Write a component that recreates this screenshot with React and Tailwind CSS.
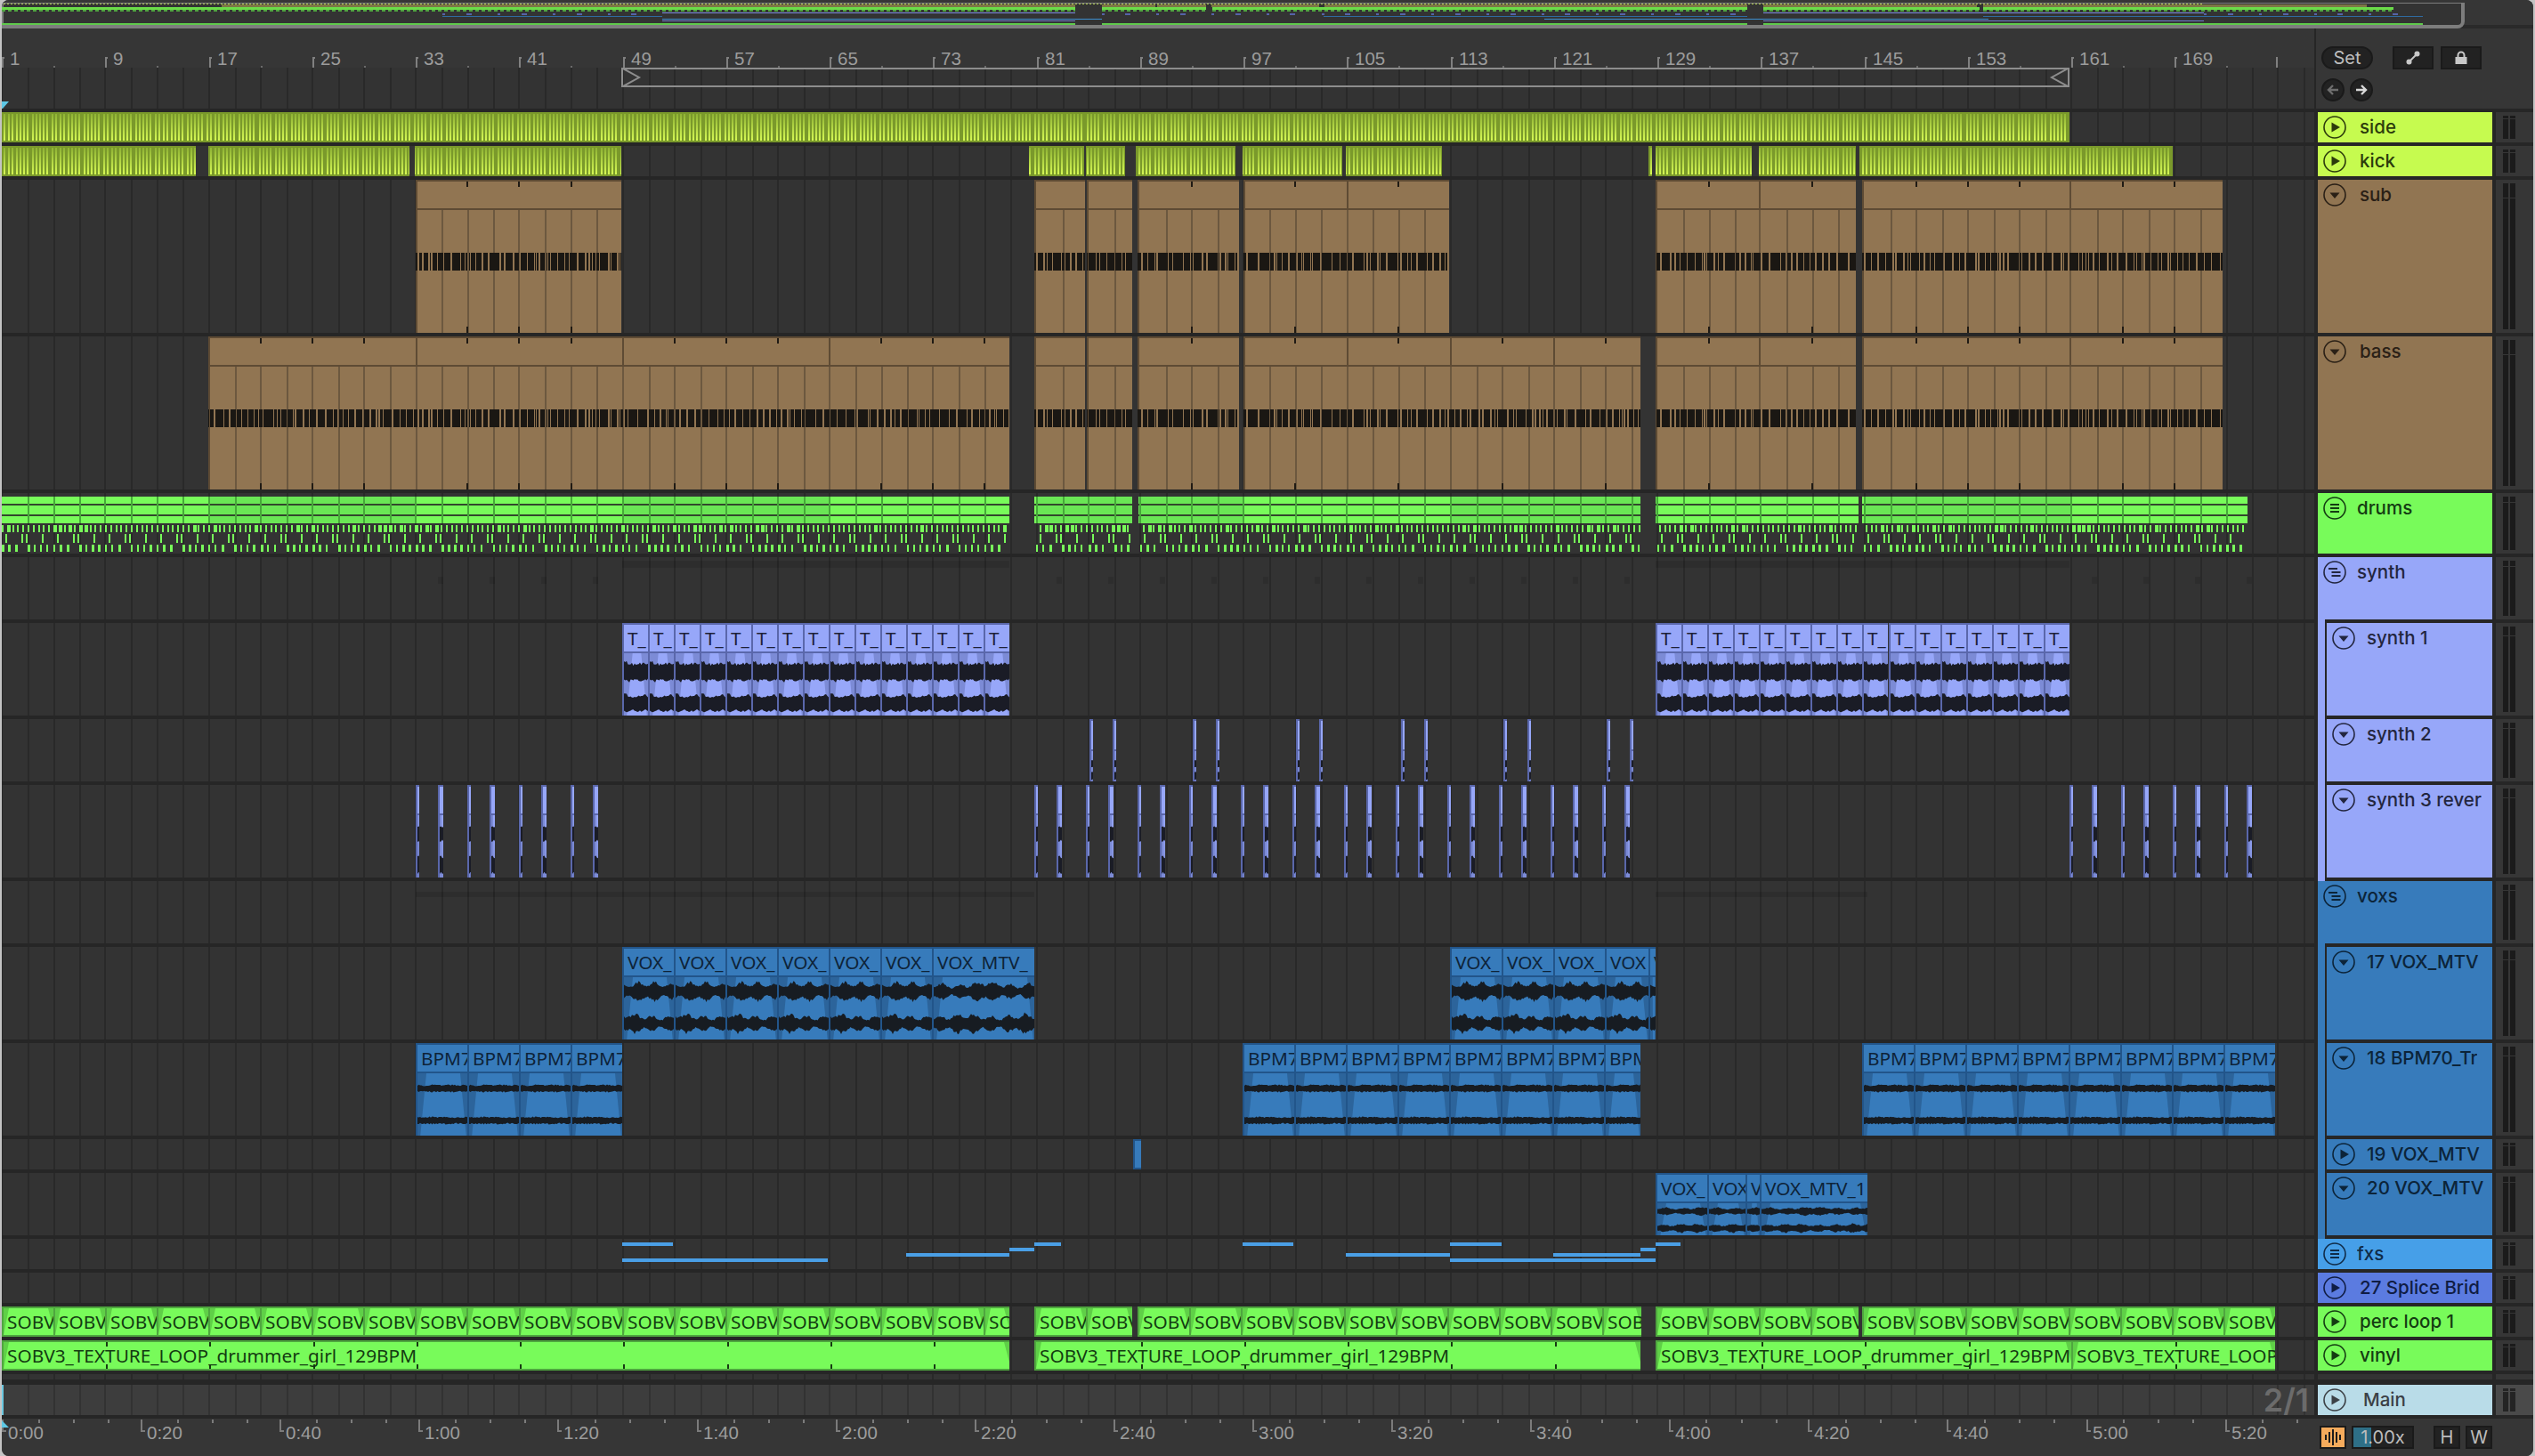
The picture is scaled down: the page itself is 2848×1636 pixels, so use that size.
import React from 'react';

const rng = (s) => { let a = s * 2654435761 >>> 0; return () => { a = (a + 0x6D2B79F5) >>> 0; let t = a; t = Math.imul(t ^ (t >>> 15), t | 1); t ^= t + Math.imul(t ^ (t >>> 7), t | 61); return ((t ^ (t >>> 14)) >>> 0) / 4294967296; }; };
const L = 2;
const gridXs = (() => { const o = []; for (let k = 0; k < 23; k++) { const b = 2.2 + 116.24 * k; [0, 30, 58.5, 88].forEach((d) => o.push(Math.round(b + d))); } return o; })();
const gridPath = gridXs.map((x) => `M${x - L - 1} 0h2v400h-2z`).join('');

const wavePath = (w, cy, amp, seed, low = 0.16) => {
  const r = rng(seed); const t = []; const b = [];
  for (let x = 0; x <= w + 1.5; x += 1.5) {
    const env = (1 - low) + low * (Math.sin(x * 0.33 + seed) * 0.6 + Math.sin(x * 0.09 + seed * 2) * 0.4);
    t.push(`${x.toFixed(1)} ${(cy - amp * env * (0.78 + 0.4 * r())).toFixed(1)}`);
    b.push(`${x.toFixed(1)} ${(cy + amp * env * (0.78 + 0.4 * r())).toFixed(1)}`);
  }
  return 'M' + t.join('L') + 'L' + b.reverse().join('L') + 'Z';
};

const stripePath = (() => { const pat = [0, 4, 8.5, 12.5, 18, 22, 26, 30, 36, 40, 44, 48, 52]; let d = ''; for (let k = 0; k < 46; k++) pat.forEach((p) => { d += `M${Math.round(k * 58.12 + p)} 0h2v30h-2z`; }); return d; })();
const barPath = (() => { const r = rng(11); let d = ''; let x = 0; while (x < 2600) { const w = 1 + Math.floor(r() * 7) + (r() > 0.7 ? 4 : 0); d += `M${x} 0h${w}v20h-${w}z`; x += w + 1 + Math.floor(r() * 2); } return d; })();

const XX = (k) => Math.round(2.2 + 58.12 * k);

const Grid = ({ c = '#292929' }) => (
  <svg className="absolute inset-0 w-full h-full" shapeRendering="crispEdges"><path d={gridPath} fill={c} /></svg>
);

const themes = {
  peri: { bg: 'bg-[#97a7f9]', border: 'border-[#5a67ab]', text: 'text-[#1d2036]', fade: 'rgba(30,40,90,.22)', wave: '#1a1c26' },
  vox: { bg: 'bg-[#377bbb]', border: 'border-[#22558a]', text: 'text-[#0e2338]', fade: 'rgba(10,30,60,.25)', wave: '#171c22' },
  green: { bg: 'bg-[#78fb5a]', border: 'border-[#4fa63f]', text: 'text-[#133b11]', fade: 'rgba(40,110,30,.3)', wave: '#111' },
};
const clipFont = 'font-["Noto_Sans",sans-serif] text-[20.8px] leading-none whitespace-nowrap';

const Clip = ({ x, w, t, title, titleH = 30, rowH, wave, seed = 3, low }) => {
  const th = themes[t]; const bodyH = rowH - titleH - 4;
  return (
    <div className={`absolute top-0 h-full overflow-hidden border-t-2 border-l-2 ${th.bg} ${th.border}`} style={{ left: x - L, width: w }}>
      <div className={`flex items-center overflow-hidden border-b-2 pl-[4px] ${th.border} ${th.text} ${clipFont}`} style={{ height: titleH + 2 }}>{title}</div>
      <svg className="block" width={w} height={bodyH + 2}>
        <polygon points={`0,0 ${Math.min(10, w / 3)},0 3,${bodyH + 2} 0,${bodyH + 2}`} fill={th.fade} />
        <polygon points={`${w},0 ${w - Math.min(10, w / 3)},0 ${w - 3},${bodyH + 2} ${w},${bodyH + 2}`} fill={th.fade} />
        {wave && <path d={wavePath(w, wave[0], wave[2], seed, low)} fill={th.wave} />}
        {wave && <path d={wavePath(w, wave[1], wave[2], seed + 1, low)} fill={th.wave} />}
      </svg>
    </div>
  );
};

const FullClip = ({ x, w, title, ticks }) => (
  <div className={`absolute top-0 h-full overflow-hidden border-y-2 border-l-2 flex items-center pl-[4px] ${themes.green.bg} ${themes.green.border} ${themes.green.text} ${clipFont}`} style={{ left: x - L, width: w }}>
    <svg className="absolute left-0 top-0" width={w} height="30">
      <polygon points={`0,0 6,0 0,30`} fill={themes.green.fade} />
      <polygon points={`${w},0 ${w - 8},0 ${w},30`} fill={themes.green.fade} />
      {ticks && ticks.map((tx) => <g key={tx} fill="#173a12"><rect x={tx - x - 1} y="0" width="2" height="5" /><rect x={tx - x - 1} y="25" width="2" height="5" /></g>)}
    </svg>
    <span className="relative">{title}</span>
  </div>
);

const StripeClip = ({ a, b }) => (
  <div className="absolute top-0 h-full overflow-hidden bg-[#7a992b]" style={{ left: a - L, width: b - a }}>
    <svg className="absolute top-[2px]" width="2620" height="30" style={{ left: -(a - 0) }} shapeRendering="crispEdges"><path d={stripePath} fill="url(#limeG)" /></svg>
  </div>
);

const TanClip = ({ a, b, joined }) => {
  const xs = gridXs.filter((x) => x > a + 3 && x < b - 2);
  const ticks = []; for (let k = 0; k < 45; k++) { const v = XX(k); if (v > a + 3 && v < b - 3) ticks.push(v); }
  return (
    <div className="absolute top-0 h-full overflow-hidden bg-[#917552]" style={{ left: a - L, width: b - a }}>
      <svg className="absolute inset-0 w-full h-full" shapeRendering="crispEdges">
        <rect width={b - a} height="2" fill="#5e4b34" />
        <rect width="2" height="34" fill="#5e4b34" />
        <rect y="34" width="2" height="138" fill={joined ? '#6c583f' : '#5e4b34'} />
        <rect y="32" width={b - a} height="2" fill="#5e4b34" />
        {xs.map((x) => <rect key={x} x={x - a - 1} y="34" width="2" height="138" fill="#6c583f" />)}
        {ticks.map((x) => <g key={x} fill="#1f1a14"><rect x={x - a - 1} y="2" width="2" height="6" /><rect x={x - a - 1} y="165" width="2" height="7" /></g>)}
        <g transform={`translate(${-a} 82)`}><path d={barPath} fill="#1a1713" /></g>
      </svg>
    </div>
  );
};

const subSegs = [[467, 698], [1162, 1219], [1221, 1272], [1278, 1392], [1397, 1513], [1513, 1628], [1860, 1976], [1976, 2085], [2092, 2325], [2325, 2497]];
const bassSegs = [[234, 467], [467, 699], [699, 931], [931, 1134], [1162, 1219], [1221, 1272], [1278, 1392], [1397, 1513], [1513, 1629], [1629, 1745], [1745, 1843], [1860, 1976], [1976, 2085], [2092, 2325], [2325, 2497]];
const drumSegs = [[2, 1134], [1162, 1272], [1279, 1843], [1860, 2088], [2092, 2525]];

const DrumsLane = () => {
  const r = rng(5);
  const n1 = []; for (let x = 2; x < 2530; x += 5.8) n1.push([x, r() > 0.82 ? 4 : 2]);
  const n2 = []; for (let k = 0; k < 44; k++) [6, 24, 29, 47].forEach((p) => n2.push([k * 58.12 + p, 2]));
  const n3 = []; for (let k = 0; k < 44; k++) [2, 9, 17, 31, 38, 45, 52].forEach((p) => n3.push([k * 58.12 + p, r() > 0.5 ? 3 : 2]));
  return (
    <svg className="absolute inset-0 w-full h-full" shapeRendering="crispEdges">
      {drumSegs.map(([a, b]) => {
        const segs = []; const clip = (arr, y, h) => arr.filter(([x, w]) => x >= a && x + w <= b).map(([x, w], i) => <rect key={`${y}-${i}`} x={Math.round(x) - L} y={y} width={w} height={h} fill="#78fb5a" />);
        for (let k = 0; k < 12; k++) {
          const s = Math.max(a, 2 + 232.5 * k); const e = Math.min(b, 2 + 232.5 * (k + 1));
          if (e > s) segs.push(<rect key={k} x={s - L} y="4" width={e - s} height="30" fill={k % 2 === 1 ? '#6ae655' : '#78fb5a'} />);
        }
        return (
          <g key={a}>
            {segs}
            <rect x={a - L} y="12" width={b - a} height="2" fill="#32482c" />
            <rect x={a - L} y="24" width={b - a} height="2" fill="#32482c" />
            {gridXs.filter((x) => x > a && x < b).map((x) => <rect key={x} x={x - L - 1} y="4" width="2" height="30" fill="#47a83a" />)}
            {clip(n1, 36, 8)}{clip(n2, 46, 10)}{clip(n3, 58, 8)}
          </g>
        );
      })}
    </svg>
  );
};

const range = (s, n, p) => Array.from({ length: n }, (_, i) => s + i * p);
const syn3N = [...range(467, 4, 58), ...range(1162, 12, 58), ...range(2325, 4, 58)];
const syn3W = syn3N.map((x) => x + 25);
const syn2 = [1224, 1250, 1340, 1366, 1456, 1482, 1574, 1600, 1689, 1716, 1805, 1831];

const fxsBars = [[0, 699, 756], [0, 1162, 1192], [0, 1396, 1453], [0, 1629, 1687], [0, 1860, 1888], [6, 1134, 1162], [6, 1843, 1860], [12, 1018, 1134], [12, 1512, 1629], [12, 1745, 1843], [18, 699, 930], [18, 1629, 1860]];

const Band = ({ a, b, top = 'top-[4px]', h = 'h-[8px]' }) => <div className={`absolute bg-black/10 ${top} ${h}`} style={{ left: a - L, width: b - a }} />;

const percClips = (() => { const o = []; [[2, 1134, 58.05], [1162, 1272, 58], [1278, 1844, 58.05], [1860, 2088, 58], [2092, 2556, 58]].forEach(([a, b, p]) => { for (let x = a; x < b - 1; x += p) { const r = Math.round(x); o.push([r, Math.round(Math.min(x + p, b)) - r]); } }); return o; })();
const vinylTicks = range(2, 23, 116.24).map(Math.round);
const LONG = 'SOBV3_TEXTURE_LOOP_drummer_girl_129BPM';

const lanes = {
  side: <StripeClip a={2} b={2325} />,
  kick: [[2, 220], [234, 460], [466, 698], [1156, 1218], [1220, 1264], [1276, 1388], [1396, 1508], [1512, 1620], [1852, 1856], [1860, 1968], [1976, 2085], [2089, 2441]].map(([a, b]) => <StripeClip key={a} a={a} b={b} />),
  sub: subSegs.map(([a, b], i) => <TanClip key={a} a={a} b={b} joined={i > 0 && subSegs[i - 1][1] === a} />),
  bass: bassSegs.map(([a, b], i) => <TanClip key={a} a={a} b={b} joined={i > 0 && bassSegs[i - 1][1] === a} />),
  drums: <DrumsLane />,
  synth: <>{[[699, 1134], [1860, 2325]].map(([a, b]) => <Band key={a} a={a} b={b} />)}{syn3W.map((x) => <Band key={x} a={x} b={x + 6} top="top-[22px]" />)}</>,
  s1: [...range(699, 15, 29).map((x) => [x, 29]), ...range(1860, 16, 29.06).map((x) => [Math.round(x), 29])].map(([x, w]) => <Clip key={x} x={x} w={w} t="peri" title="T_" rowH={104} wave={[21, 56, 11]} seed={7} />),
  s2: syn2.map((x) => <Clip key={x} x={x} w={4} t="peri" rowH={70} titleH={32} wave={[14, 28, 5]} />),
  s3: [...syn3N.map((x) => [x, 4]), ...syn3W.map((x) => [x, 6])].map(([x, w]) => <Clip key={x} x={x} w={w} t="peri" rowH={104} wave={[21, 56, 11]} />),
  voxs: <>{[[467, 1162], [1860, 2098]].map(([a, b]) => <Band key={a} a={a} b={b} top="top-[12px]" h="h-[6px]" />)}</>,
  v17: [...range(699, 6, 58).map((x) => [x, 58, 'VOX_']), [1047, 115, 'VOX_MTV_'], [1629, 58, 'VOX_'], [1687, 58, 'VOX_'], [1745, 58, 'VOX_'], [1803, 49, 'VOX'], [1852, 8, 'V']].map(([x, w, s]) => <Clip key={x} x={x} w={w} t="vox" title={s} rowH={104} wave={[16, 52, 11]} seed={w > 60 ? 17 : 9} low={0.34} />),
  v18: [...range(467, 4, 58), ...range(1396, 7, 58), ...range(2092, 8, 58)].map((x) => <Clip key={x} x={x} w={58} t="vox" title="BPM7" rowH={104} wave={[17, 53, 4]} seed={21} low={0.1} />).concat(<Clip key="last" x={1802} w={41} t="vox" title="BPM" rowH={104} wave={[17, 53, 4]} seed={21} low={0.1} />),
  v19: <Clip x={1273} w={9} t="vox" rowH={34} titleH={30} />,
  v20: [[1860, 58, 'VOX_'], [1918, 43, 'VOX'], [1961, 16, 'V'], [1977, 121, 'VOX_MTV_1']].map(([x, w, s]) => <Clip key={x} x={x} w={w} t="vox" title={s} rowH={70} wave={[9, 28, 5]} seed={17} low={0.3} />),
  fxs: fxsBars.map(([y, a, b], i) => <div key={i} className="absolute h-[4px] bg-[#4a9fe6]" style={{ top: y + 4, left: a - L, width: b - a }} />),
  perc: percClips.map(([x, w]) => <FullClip key={x} x={x} w={w} title={w < 34 ? 'SO' : w < 50 ? 'SOB' : 'SOBV'} />),
  vinyl: [[2, 1132, LONG], [1162, 681, LONG], [1860, 467, LONG], [2327, 229, 'SOBV3_TEXTURE_LOOP']].map(([x, w, s]) => <FullClip key={x} x={x} w={w} title={s} ticks={vinylTicks.filter((t) => t > x + 4 && t < x + w - 4)} />),
};

const hdr = {
  lime: { bg: 'bg-[#c6fb4f]', fg: 'text-[#2c3b0c]' },
  tan: { bg: 'bg-[#917552]', fg: 'text-[#2a2016]' },
  green: { bg: 'bg-[#78fb5a]', fg: 'text-[#143c12]' },
  peri: { bg: 'bg-[#97a7f9]', fg: 'text-[#23263f]' },
  vox: { bg: 'bg-[#377bbb]', fg: 'text-[#0c2439]' },
  fx: { bg: 'bg-[#469fe8]', fg: 'text-[#102c48]' },
  spl: { bg: 'bg-[#5b7be0]', fg: 'text-[#101d44]' },
  main: { bg: 'bg-[#b9dce8]', fg: 'text-[#3c4146]' },
};

const Icon = ({ k }) => (
  <svg width="26" height="26" viewBox="0 0 26 26" className="shrink-0" fill="currentColor">
    <circle cx="13" cy="13" r="12" fill="none" stroke="currentColor" strokeWidth="1.6" />
    {k === 'play' && <path d="M9.5 7.5L19 13L9.5 18.5Z" />}
    {k === 'down' && <path d="M7.5 10.5H18.5L13 17Z" />}
    {k === 'menu' && <path d="M8 8h10v2H8zM8 12h10v2H8zM8 16h10v2H8z" />}
    {k === 'step' && <path d="M6 8h10v2H6zM9.5 12h10v2H9.5zM9.5 16h10v2H9.5z" />}
  </svg>
);

const Meter = ({ h, light }) => {
  const H = h - 8; const cap = Math.max(2, Math.round(H * 0.1));
  const bar = light ? 'bg-[#242424]' : 'bg-[#1b1b1b]';
  return (
    <div className={`w-[42px] h-full flex gap-[2px] pl-[8px] pt-[4px] ${light ? 'bg-[#4a4a4a]' : 'bg-[#363636]'}`}>
      {[0, 1].map((i) => (
        <div key={i} className="w-[6px] flex flex-col gap-[1px]" style={{ height: H }}>
          <div className={bar} style={{ height: cap }} />
          <div className={`flex-1 ${bar}`} />
        </div>
      ))}
    </div>
  );
};

const Row = ({ id, name, h, c, icon, indent, ml = 'ml-[15px]', strip }) => {
  const th = hdr[c];
  return (
    <div className="flex mb-[4px]" style={{ height: h }}>
      <div className="relative w-[2598px] h-full overflow-hidden bg-[#333333]">
        <Grid />
        {lanes[id]}
      </div>
      <div className="relative ml-[4px] w-[196px] h-full">
        {(indent || strip) && <div className={`absolute left-0 top-0 -bottom-[4px] w-[8px] ${th.bg}`} />}
        <div className={`absolute top-0 right-0 bottom-0 pl-[6px] pt-[4px] flex items-start ${th.bg} ${th.fg} ${indent ? 'left-[10px]' : 'left-0'}`}>
          <Icon k={icon} />
          <span className={`${ml} font-["Inter",sans-serif] font-medium text-[20.5px] leading-[26px] whitespace-nowrap overflow-hidden`}>{name}</span>
        </div>
      </div>
      <div className="ml-[4px] h-full"><Meter h={h} /></div>
    </div>
  );
};

const rows = [
  { id: 'side', name: 'side', h: 34, c: 'lime', icon: 'play' },
  { id: 'kick', name: 'kick', h: 34, c: 'lime', icon: 'play' },
  { id: 'sub', name: 'sub', h: 172, c: 'tan', icon: 'down' },
  { id: 'bass', name: 'bass', h: 172, c: 'tan', icon: 'down' },
  { id: 'drums', name: 'drums', h: 68, c: 'green', icon: 'menu', ml: 'ml-[12px]' },
  { id: 'synth', name: 'synth', h: 70, c: 'peri', icon: 'step', ml: 'ml-[12px]', strip: true },
  { id: 's1', name: 'synth 1', h: 104, c: 'peri', icon: 'down', indent: true, ml: 'ml-[13px]' },
  { id: 's2', name: 'synth 2', h: 70, c: 'peri', icon: 'down', indent: true, ml: 'ml-[13px]' },
  { id: 's3', name: 'synth 3 rever', h: 104, c: 'peri', icon: 'down', indent: true, ml: 'ml-[13px]' },
  { id: 'voxs', name: 'voxs', h: 70, c: 'vox', icon: 'step', ml: 'ml-[12px]', strip: true },
  { id: 'v17', name: '17 VOX_MTV', h: 104, c: 'vox', icon: 'down', indent: true, ml: 'ml-[13px]' },
  { id: 'v18', name: '18 BPM70_Tr', h: 104, c: 'vox', icon: 'down', indent: true, ml: 'ml-[13px]' },
  { id: 'v19', name: '19 VOX_MTV', h: 34, c: 'vox', icon: 'play', indent: true, ml: 'ml-[13px]' },
  { id: 'v20', name: '20 VOX_MTV', h: 70, c: 'vox', icon: 'down', indent: true, ml: 'ml-[13px]' },
  { id: 'fxs', name: 'fxs', h: 34, c: 'fx', icon: 'menu', ml: 'ml-[12px]' },
  { id: 'spl', name: '27 Splice Brid', h: 34, c: 'spl', icon: 'play' },
  { id: 'perc', name: 'perc loop 1', h: 34, c: 'green', icon: 'play' },
  { id: 'vinyl', name: 'vinyl', h: 34, c: 'green', icon: 'play' },
];

const OV = 1.065;
const ovRects = (list, y, h, fill) => list.map(([a, b], i) => <rect key={`${y}${i}`} x={a * OV} y={y} width={(b - a) * OV} height={h} fill={fill} />);
const Overview = () => (
  <div className="relative h-[32px] w-full bg-[#363636] overflow-hidden">
    <div className="absolute left-0 top-[28px] h-[4px] w-full bg-[#2a2a2a]" />
    <div className="absolute left-0 top-[3px] h-[29px] w-[2767px] bg-[#333333] border-l-[2px] border-r-[4px] border-b-[4px] border-t border-[#7d7d7d] rounded-br-[8px]" />
    <svg className="absolute left-[-2px] top-0" width="2765" height="28" shapeRendering="crispEdges">
      <line x1="4" x2={2325 * OV} y1="4.5" y2="4.5" stroke="#a8c84a" strokeDasharray="2 2" />
      {ovRects(bassSegs, 5, 3, '#7d7746')}
      {ovRects(drumSegs, 8, 3, '#6bdc49')}
      {drumSegs.map(([a, b]) => <line key={a} x1={a * OV} x2={b * OV} y1="12" y2="12" stroke="#4fa63f" strokeWidth="2" strokeDasharray="4 3" />)}
      {ovRects([[699, 1134], [1860, 2325]], 14, 1, '#7d8de0')}
      {syn3N.map((x) => <rect key={x} x={x * OV} y="15" width="3" height="2" fill="#5563a8" />)}
      {syn3W.map((x) => <rect key={x} x={x * OV} y="15" width="6" height="2" fill="#5563a8" />)}
      {ovRects([[467, 699], [1396, 1843], [2092, 2556]], 18, 1, '#2f6aa0')}
      {ovRects([[699, 1162], [1629, 1860], [1860, 2098]], 21, 1, '#3d8fd0')}
      {ovRects([[699, 1134], [1860, 2325]], 23, 1, '#6b7ac8')}
      {ovRects([[2, 1134], [1162, 1843], [1860, 2556]], 26, 2, '#5fc94b')}
    </svg>
  </div>
);

const Ruler = () => {
  const labels = range(1, 22, 8);
  return (
    <div className="relative h-[90px] w-[2598px] bg-[#363636] overflow-hidden">
      <div className="absolute left-0 right-0 top-[44px] bottom-0 bg-[#333333] overflow-hidden"><Grid /></div>
      {labels.map((b) => {
        const x = Math.round(2.2 + 14.53 * (b - 1)) - L;
        return (
          <React.Fragment key={b}>
            <div className="absolute top-[32px] h-[12px] w-[2px] bg-[#808080]" style={{ left: x }} />
            <div className="absolute top-[32px] h-[2px] w-[3px] bg-[#808080]" style={{ left: x }} />
            <div className="absolute top-[42px] h-[2px] w-[2px] bg-[#6a6a6a]" style={{ left: x + 58 }} />
            <span className='absolute top-[22px] font-["Liberation_Sans",sans-serif] text-[20.5px] leading-[24px] text-[#9c9c9c]' style={{ left: x + 9 }}>{b}</span>
          </React.Fragment>
        );
      })}
      <div className="absolute top-[32px] h-[12px] w-[2px] bg-[#808080] left-[2555px]" />
      <div className="absolute top-[44px] left-[696px] h-[22px] w-[1627px] border-y-2 border-x-2 border-[#8d8d8d]">
        <svg className="absolute left-0 top-0" width="1623" height="18" fill="none" stroke="#8d8d8d" strokeWidth="2">
          <path d="M0 -1L18 9L0 19" />
          <path d="M1623 -1L1605 9L1623 19" />
        </svg>
      </div>
      <svg className="absolute left-0 top-[82px]" width="8" height="8"><path d="M0 0H8L1 8H0Z" fill="#5ec8e5" /></svg>
    </div>
  );
};

const timeLabels = ['0:00', '0:20', '0:40', '1:00', '1:20', '1:40', '2:00', '2:20', '2:40', '3:00', '3:20', '3:40', '4:00', '4:20', '4:40', '5:00', '5:20'];
const TimeRuler = () => (
  <div className="relative h-[42px] w-[2598px] overflow-hidden">
    <svg className="absolute left-0 top-0" width="2598" height="16" shapeRendering="crispEdges">
      {range(0, 70, 39.03).map((x, i) => <rect key={i} x={Math.round(x) + 2} y="1" width="2" height={i % 4 === 0 ? 0 : 4} fill="#7b7b7b" />)}
      {timeLabels.map((t, i) => <path key={t} d={`M${Math.round(i * 156.1)} 1h2v12h3v2h-5z`} fill="#7b7b7b" />)}
    </svg>
    {timeLabels.map((t, i) => (
      <span key={t} className='absolute top-[4px] font-["Liberation_Sans",sans-serif] text-[20.5px] leading-[24px] text-[#9c9c9c]' style={{ left: Math.round(i * 156.1) + 7 }}>{t}</span>
    ))}
    <svg className="absolute left-0 top-[2px]" width="8" height="8"><path d="M0 0L8 8H0Z" fill="#5ec8e5" /></svg>
  </div>
);

const BtnSq = ({ w = 'w-[46px]', children }) => (
  <div className={`${w} h-[26px] flex items-center justify-center bg-[#222222] border-2 border-[#1a1a1a] text-[#bdbdbd] font-["Inter",sans-serif] text-[20px] leading-none`}>{children}</div>
);

export default function App() {
  return (
    <div className="w-[2848px] h-[1636px] bg-[#c4c4c4] pl-[2px] pr-[2px] overflow-hidden">
      <svg className="absolute w-0 h-0"><defs><linearGradient id="limeG" x1="0" x2="0" y1="0" y2="1"><stop offset="0" stopColor="#8fb334" /><stop offset="1" stopColor="#d6f955" /></linearGradient></defs></svg>
      <div className="w-[2844px] h-[1636px] bg-[#262626] rounded-[8px] overflow-hidden">
        <Overview />
        <div className="flex mb-[4px]">
          <Ruler />
          <div className="ml-[2px] w-[244px] h-[90px] bg-[#363636] pl-[6px] pt-[20px]">
            <div className="flex items-center">
              <div className='w-[58px] h-[26px] rounded-full bg-[#222222] border-2 border-[#1a1a1a] flex items-center justify-center text-[#bdbdbd] font-["Inter",sans-serif] text-[20px] leading-none'>Set</div>
              <div className="ml-[22px]"><BtnSq><svg width="16" height="16" viewBox="0 0 16 16"><path d="M3.5 12.5L12.5 3.5" stroke="#c8c8c8" strokeWidth="2" /><circle cx="3.5" cy="12.5" r="3" fill="#c8c8c8" /><circle cx="12.5" cy="3.5" r="3" fill="#c8c8c8" /></svg></BtnSq></div>
              <div className="ml-[8px]"><BtnSq><svg width="16" height="16" viewBox="0 0 16 16" fill="#c8c8c8"><path d="M4.5 7V5a3.5 3.5 0 0 1 7 0v2" fill="none" stroke="#c8c8c8" strokeWidth="2" /><rect x="1.5" y="7" width="13" height="8" /></svg></BtnSq></div>
            </div>
            <div className="flex gap-[6px] mt-[10px]">
              <div className="w-[26px] h-[26px] rounded-full bg-[#222222] border-2 border-[#1a1a1a] flex items-center justify-center"><svg width="14" height="12" viewBox="0 0 14 12"><path d="M13 6H3M7 1L2 6L7 11" fill="none" stroke="#6e6e6e" strokeWidth="2.4" /></svg></div>
              <div className="w-[26px] h-[26px] rounded-full bg-[#222222] border-2 border-[#1a1a1a] flex items-center justify-center"><svg width="14" height="12" viewBox="0 0 14 12"><path d="M1 6H11M7 1L12 6L7 11" fill="none" stroke="#d8d8d8" strokeWidth="2.4" /></svg></div>
            </div>
          </div>
        </div>
        {rows.map((r) => <Row key={r.id} {...r} />)}
        <div className="flex mb-[6px] h-[6px]">
          <div className="relative w-[2598px] h-full bg-[#333333] overflow-hidden"><Grid /></div>
          <div className="ml-[4px] w-[196px] h-full bg-[#333333]" />
          <div className="ml-[4px] w-[42px] h-full bg-[#363636]" />
        </div>
        <div className="flex h-[34px] mb-[4px]">
          <div className="relative w-[2598px] h-full bg-[#3d3d3d] overflow-hidden">
            <Grid c="#323232" />
            <div className="absolute left-0 top-0 h-full w-[2px] bg-[#6cc8e0]" />
            <span className='absolute right-[6px] top-[0px] font-["Inter",sans-serif] font-semibold text-[36px] leading-[34px] text-[#6b6b6b]'>2/1</span>
          </div>
          <div className={`relative ml-[4px] w-[196px] h-full pl-[6px] pt-[4px] flex items-start ${hdr.main.bg} ${hdr.main.fg}`}>
            <Icon k="play" />
            <span className='ml-[19px] font-["Inter",sans-serif] font-medium text-[20.5px] leading-[26px]'>Main</span>
          </div>
          <div className="ml-[4px] h-full"><Meter h={34} light /></div>
        </div>
        <div className="flex h-[42px] bg-[#363636]">
          <TimeRuler />
          <div className="flex pl-[6px] pt-[8px] items-start">
            <div className="w-[30px] h-[26px] bg-[#f5ab5c] border-2 border-[#1a1a1a] flex items-center justify-center">
              <svg width="20" height="18" viewBox="0 0 20 18" fill="#1c1c1c"><rect x="1" y="6" width="2" height="6" /><rect x="5" y="3" width="2" height="12" /><rect x="9" y="0" width="2" height="18" /><rect x="13" y="3" width="2" height="12" /><rect x="17" y="6" width="2" height="6" /></svg>
            </div>
            <div className='relative ml-[6px] w-[70px] h-[26px] bg-[#222222] border-2 border-[#1a1a1a] flex items-center justify-center text-[#bdbdbd] font-["Inter",sans-serif] text-[20px] leading-none overflow-hidden'>
              <div className="absolute left-0 top-0 h-full w-[20px] bg-[#2e6f87]" />
              <span className="relative">1.00x</span>
            </div>
            <div className="ml-[22px]"><BtnSq w="w-[30px]">H</BtnSq></div>
            <div className="ml-[6px]"><BtnSq w="w-[30px]">W</BtnSq></div>
          </div>
        </div>
      </div>
    </div>
  );
}
